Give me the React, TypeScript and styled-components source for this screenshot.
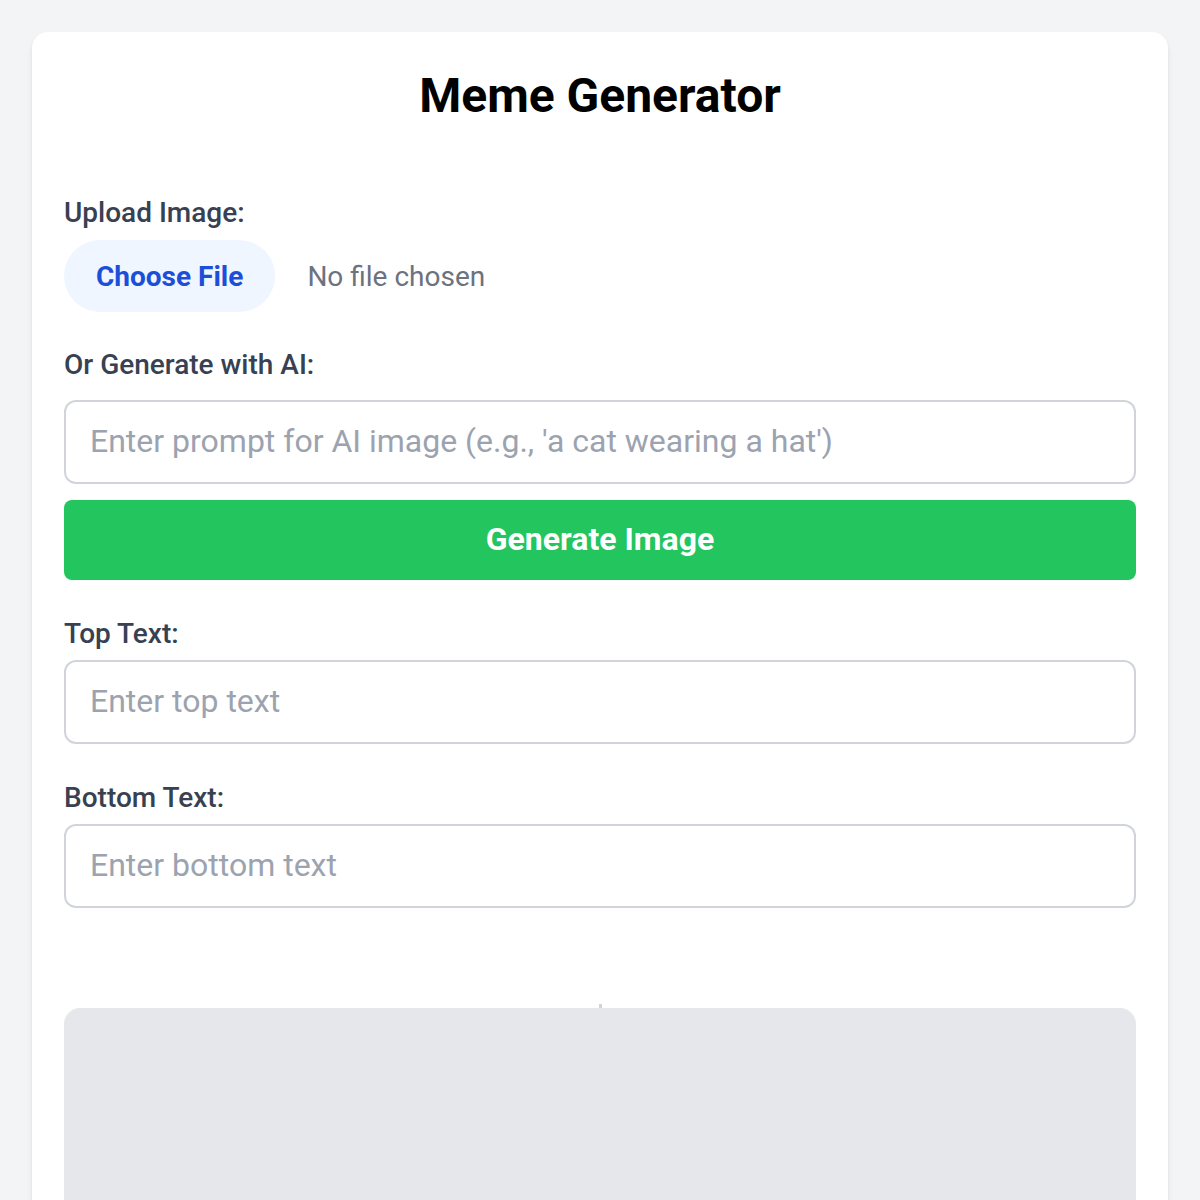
import React, { useState } from "react";
import styled, { createGlobalStyle } from "styled-components";

const GlobalStyle = createGlobalStyle`
  * { box-sizing: border-box; }
  html, body {
    margin: 0;
    padding: 0;
    background: #f3f4f6;
    font-family: Roboto, "Noto Sans", "Liberation Sans", sans-serif;
  }
`;

const Page = styled.div`
  min-height: 1200px;
  padding: 32px 32px 0;
`;

const Card = styled.div`
  background: #ffffff;
  border-radius: 16px 16px 0 0;
  box-shadow: 0 4px 6px -1px rgba(0, 0, 0, 0.1), 0 2px 4px -2px rgba(0, 0, 0, 0.1);
  padding: 32px 32px 0;
  min-height: 1168px;
`;

const Title = styled.h1`
  margin: 0 0 64px;
  font-size: 48px;
  line-height: 64px;
  font-weight: 700;
  color: #000000;
  text-align: center;
`;

const Field = styled.div<{ $gap?: number }>`
  display: flex;
  flex-direction: column;
  gap: ${(p) => p.$gap ?? 8}px;
  margin-bottom: 32px;
`;

const Label = styled.label<{ $shift?: number }>`
  padding-top: ${(p) => (p.$shift ?? 1) * 2}px;
  font-size: 28px;
  line-height: ${(p) => 40 - (p.$shift ?? 1) * 2}px;
  font-weight: 500;
  color: #374151;
`;

const FileRow = styled.div`
  display: flex;
  align-items: center;
  gap: 32px;
`;

const FileButton = styled.label`
  display: inline-flex;
  align-items: center;
  height: 72px;
  padding: 0 32px;
  border-radius: 9999px;
  background: #eff6ff;
  color: #1d4ed8;
  font-size: 28px;
  font-weight: 700;
  cursor: pointer;

  input {
    display: none;
  }
`;

const FileName = styled.span`
  font-size: 28px;
  color: #6b7280;
`;

const TextInput = styled.input`
  width: 100%;
  height: 84px;
  padding: 15px 24px 17px;
  border: 2px solid #d1d5db;
  border-radius: 12px;
  font-family: inherit;
  font-size: 32px;
  line-height: 48px;
  color: #111827;
  outline: none;

  &::placeholder {
    color: #9ca3af;
  }
`;

const GenerateButton = styled.button`
  width: 100%;
  height: 80px;
  padding: 0 0 2px;
  border: none;
  border-radius: 8px;
  background: #22c55e;
  color: #ffffff;
  font-family: inherit;
  font-size: 32px;
  font-weight: 700;
  cursor: pointer;
`;

const Preview = styled.div`
  display: flex;
  flex-direction: column;
  align-items: center;
  margin-top: 96px;
`;

const Tick = styled.div`
  width: 3px;
  height: 4px;
  background: #d1d5db;
`;

const Canvas = styled.div`
  width: 100%;
  height: 400px;
  background: #e5e7eb;
  border-radius: 16px;
`;

export default function App() {
  const [fileName, setFileName] = useState("No file chosen");
  const [prompt, setPrompt] = useState("");
  const [topText, setTopText] = useState("");
  const [bottomText, setBottomText] = useState("");

  return (
    <>
      <GlobalStyle />
      <Page>
        <Card>
          <Title>Meme Generator</Title>

          <Field>
            <Label>Upload Image:</Label>
            <FileRow>
              <FileButton>
                Choose File
                <input
                  type="file"
                  accept="image/*"
                  onChange={(e) =>
                    setFileName(e.target.files?.[0]?.name ?? "No file chosen")
                  }
                />
              </FileButton>
              <FileName>{fileName}</FileName>
            </FileRow>
          </Field>

          <Field $gap={16}>
            <Label>Or Generate with AI:</Label>
            <TextInput
              placeholder="Enter prompt for AI image (e.g., 'a cat wearing a hat')"
              value={prompt}
              onChange={(e) => setPrompt(e.target.value)}
            />
            <GenerateButton>Generate Image</GenerateButton>
          </Field>

          <Field>
            <Label $shift={2}>Top Text:</Label>
            <TextInput
              placeholder="Enter top text"
              value={topText}
              onChange={(e) => setTopText(e.target.value)}
            />
          </Field>

          <Field>
            <Label $shift={2}>Bottom Text:</Label>
            <TextInput
              placeholder="Enter bottom text"
              value={bottomText}
              onChange={(e) => setBottomText(e.target.value)}
            />
          </Field>

          <Preview>
            <Tick />
            <Canvas />
          </Preview>
        </Card>
      </Page>
    </>
  );
}
